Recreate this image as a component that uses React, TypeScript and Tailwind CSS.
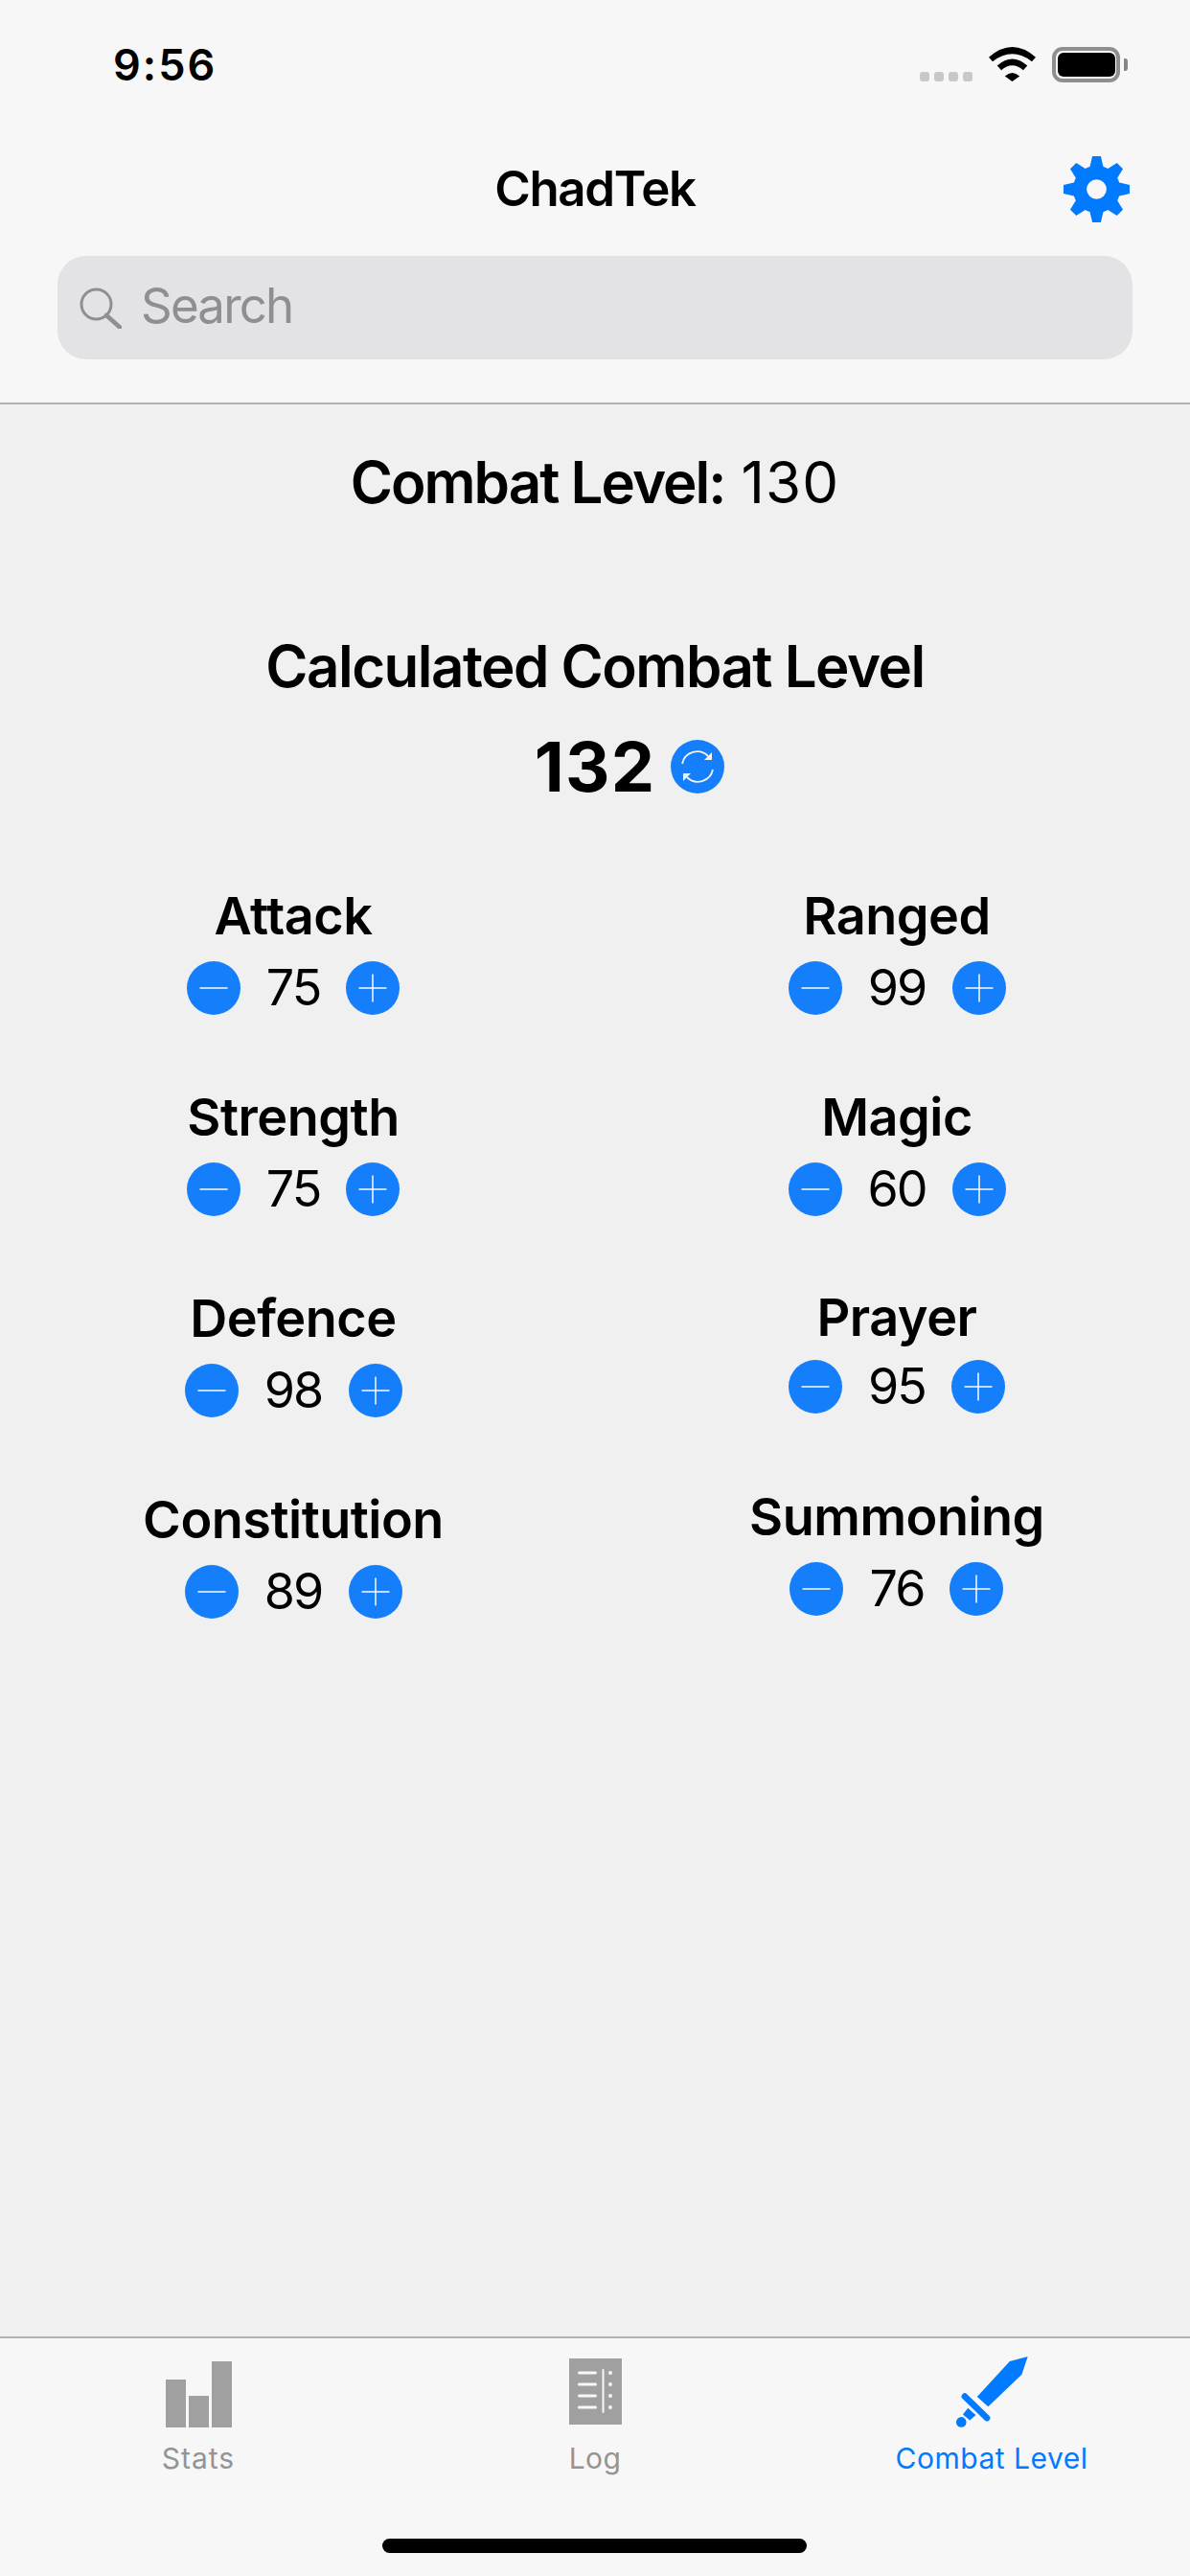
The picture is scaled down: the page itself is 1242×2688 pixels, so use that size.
import { FC } from "react";

const FONT = "font-['Inter','Liberation_Sans',sans-serif]";

interface IStat {
  name: string;
  value: number;
  wrap: string; // space above the block
  gap: string; // label to controls
  numW: string; // the number slot differs per value
}

const leftStats: IStat[] = [
  { name: "Attack", value: 75, wrap: "mt-0", gap: "mt-[14px]", numW: "w-[54px]" },
  { name: "Strength", value: 75, wrap: "mt-[74px]", gap: "mt-[14px]", numW: "w-[54px]" },
  { name: "Defence", value: 98, wrap: "mt-[74px]", gap: "mt-[14px]", numW: "w-[59px]" },
  { name: "Constitution", value: 89, wrap: "mt-[74px]", gap: "mt-[14px]", numW: "w-[59px]" },
];

const rightStats: IStat[] = [
  { name: "Ranged", value: 99, wrap: "mt-0", gap: "mt-[14px]", numW: "w-[59px]" },
  { name: "Magic", value: 60, wrap: "mt-[74px]", gap: "mt-[14px]", numW: "w-[59px]" },
  { name: "Prayer", value: 95, wrap: "mt-[73px]", gap: "mt-[11px]", numW: "w-[58px]" },
  { name: "Summoning", value: 76, wrap: "mt-[75px]", gap: "mt-[14px]", numW: "w-[55px]" },
];

const Round: FC<{ kind: "minus" | "plus" }> = ({ kind }) => (
  <div className="flex h-[56px] w-[56px] items-center justify-center rounded-full bg-[#147efb]">
    <svg width="30" height="30" viewBox="0 0 30 30">
      <path d="M0.5 15H29.5" stroke="#fff" strokeWidth="1.6" opacity="0.92" />
      {kind === "plus" && <path d="M15 0.5V29.5" stroke="#fff" strokeWidth="1.6" opacity="0.92" />}
    </svg>
  </div>
);

const Stat: FC<{ stat: IStat }> = ({ stat }) => (
  <div className={`flex flex-col items-center ${stat.wrap}`}>
    <p className="h-[66px] text-[54px] leading-[66px] font-semibold tracking-[-0.5px] whitespace-nowrap text-black">
      {stat.name}
    </p>
    <div className={`flex items-center gap-[28px] ${stat.gap}`}>
      <Round kind="minus" />
      <span
        className={`flex justify-center text-[52px] leading-[56px] font-normal tracking-[-2px] text-black ${stat.numW}`}
      >
        {stat.value}
      </span>
      <Round kind="plus" />
    </div>
  </div>
);

const Gear = () => (
  <svg width="69" height="69" viewBox="-35 -35 70 70" fill="#007aff">
    <path
      fillRule="evenodd"
      d="M0 -25A25 25 0 1 1 0 25A25 25 0 1 1 0 -25ZM0 -10.5A10.5 10.5 0 1 0 0 10.5A10.5 10.5 0 1 0 0 -10.5Z"
    />
    {[0, 45, 90, 135, 180, 225, 270, 315].map((a) => (
      <path key={a} transform={`rotate(${a})`} d="M-4.5 -35H4.5L7.5 -22H-7.5Z" />
    ))}
  </svg>
);

const Wifi = () => (
  <svg width="49" height="36" viewBox="0 0 146 107" fill="#000">
    <path d="M0 32Q73 -32 146 32L134 45Q73 -2 12 45Z" />
    <path d="M26 58Q73 16 120 58L107 72Q73 42 39 72Z" />
    <path d="M50 91Q73 69 96 91L73 107Z" />
  </svg>
);

const Battery = () => (
  <div className="flex items-center">
    <div className="flex h-[37px] w-[71px] items-center justify-center rounded-[11px] border-[4px] border-[#8f8f8f] bg-[#fbfbfb]">
      <div className="h-[25px] w-[60px] rounded-[6px] bg-black" />
    </div>
    <div className="ml-[4px] h-[13px] w-[4px] rounded-r-[3px] bg-[#858585]" />
  </div>
);

const Sword = () => (
  <svg width="76" height="76" viewBox="228 82 230 230" fill="#007aff">
    <path d="M457 85L400 100L297 212L332 243L438 142Z" />
    <path d="M258 211L328 279" stroke="#007aff" strokeWidth="20" strokeLinecap="round" />
    <path d="M268 248L293 270L274 286L252 268Z" />
    <circle cx="247" cy="292" r="16" />
  </svg>
);

const App: FC = () => {
  return (
    <div className={`flex h-[2688px] w-[1242px] flex-col overflow-hidden bg-[#f0f0f0] text-black ${FONT}`}>
      <header className="flex h-[422px] shrink-0 flex-col border-b-2 border-[#b3b3b3] bg-[#f7f7f7]">
        <div className="flex h-[134px] shrink-0 items-start justify-between pt-[49px] pr-[65px] pl-[118px]">
          <span className="text-[45px] leading-[37px] font-semibold tracking-[2px]">9:56</span>
          <div className="flex items-start">
            <div className="mt-[26px] mr-[17px] flex gap-[5px]">
              {[0, 1, 2, 3].map((i) => (
                <div key={i} className="h-[10px] w-[10px] rounded-[3px] bg-[#c8c8c8]" />
              ))}
            </div>
            <Wifi />
            <div className="ml-[17px]">
              <Battery />
            </div>
          </div>
        </div>
        <div className="relative flex h-[133px] shrink-0 items-start justify-center">
          <span className="mt-[31px] text-[51px] leading-[64px] font-semibold tracking-[-1.3px]">ChadTek</span>
          <div className="absolute top-[29px] right-[63px]">
            <Gear />
          </div>
        </div>
        <div className="mx-[60px] flex h-[108px] shrink-0 items-center rounded-[30px] bg-[#e3e3e5]">
          <svg className="ml-[23px]" width="44" height="43" viewBox="0 0 44 43" fill="none" stroke="#8e8e93">
            <circle cx="17.5" cy="17.5" r="15.5" strokeWidth="3" />
            <path d="M28 29L42 41.5" strokeWidth="4.5" strokeLinecap="round" />
          </svg>
          <span className="ml-[20px] pb-[4px] text-[51px] tracking-[-1.8px] text-[#8e8e93]">Search</span>
        </div>
      </header>

      <main className="flex flex-1 flex-col items-center">
        <p className="mt-[46px] text-[60px] leading-[70px]">
          <span className="font-semibold tracking-[-1.95px]">Combat Level:</span>{" "}
          <span className="tracking-[1.2px]">130</span>
        </p>
        <p className="mt-[122px] text-[60px] leading-[70px] font-semibold tracking-[-1.5px]">
          Calculated Combat Level
        </p>
        <div className="mt-[30px] grid h-[80px] w-full grid-cols-[1fr_auto_1fr] items-center">
          <div />
          <span className="text-[72px] leading-[80px] font-bold tracking-[1.2px]">132</span>
          <div className="ml-[16px] flex h-[56px] w-[56px] items-center justify-center rounded-full bg-[#147efb]">
            <svg width="36" height="36" viewBox="0 0 36 36" fill="none" stroke="#f4f4f4" strokeWidth="1.8">
              <path d="M2 15A16 16 0 0 1 29 7" />
              <path d="M34 21A16 16 0 0 1 7 29" />
              <path d="M33 3L33 11L25 11Z" fill="#f4f4f4" stroke="none" />
              <path d="M3 33L3 25L11 25Z" fill="#f4f4f4" stroke="none" />
            </svg>
          </div>
        </div>
        <div className="mt-[83px] flex w-full">
          <div className="flex w-[612px] flex-col items-center">
            {leftStats.map((s) => (
              <Stat key={s.name} stat={s} />
            ))}
          </div>
          <div className="ml-[18px] flex w-[612px] flex-col items-center">
            {rightStats.map((s) => (
              <Stat key={s.name} stat={s} />
            ))}
          </div>
        </div>
      </main>

      <footer className="relative h-[250px] shrink-0 border-t-2 border-[#b3b3b3] bg-[#f7f7f7]">
        <div className="flex">
          <div className="flex w-[414px] flex-col items-center">
            <div className="mt-[24px] flex h-[69px] items-end gap-[3px]">
              <div className="h-[50px] w-[21px] bg-[#a0a0a0]" />
              <div className="h-[33px] w-[21px] bg-[#a0a0a0]" />
              <div className="h-[69px] w-[21px] bg-[#a0a0a0]" />
            </div>
            <span className="mt-[20px] text-[30px] leading-[24px] tracking-[1px] text-[#949494]">Stats</span>
          </div>
          <div className="flex w-[414px] flex-col items-center">
            <svg className="mt-[21px]" width="55" height="69" viewBox="0 0 55 69">
              <rect width="55" height="69" fill="#a0a0a0" />
              {[15, 27, 39, 51].map((y) => (
                <g key={y} fill="#f7f7f7">
                  <rect x="9" y={y - 1.5} width="20" height="3" rx="1.5" />
                  <circle cx="43" cy={y} r="2" />
                </g>
              ))}
              <rect x="34.5" y="11" width="2" height="46" rx="1" fill="#f7f7f7" />
            </svg>
            <span className="mt-[23px] text-[30px] leading-[24px] tracking-[0.4px] text-[#949494]">Log</span>
          </div>
          <div className="flex w-[414px] flex-col items-center">
            <div className="mt-[18px] ml-[-1px]">
              <Sword />
            </div>
            <span className="mt-[19px] text-[30px] leading-[24px] tracking-[0.5px] text-[#007aff]">Combat Level</span>
          </div>
        </div>
        <div className="absolute top-[209px] left-[399px] h-[15px] w-[443px] rounded-full bg-black" />
      </footer>
    </div>
  );
};

export default App;
